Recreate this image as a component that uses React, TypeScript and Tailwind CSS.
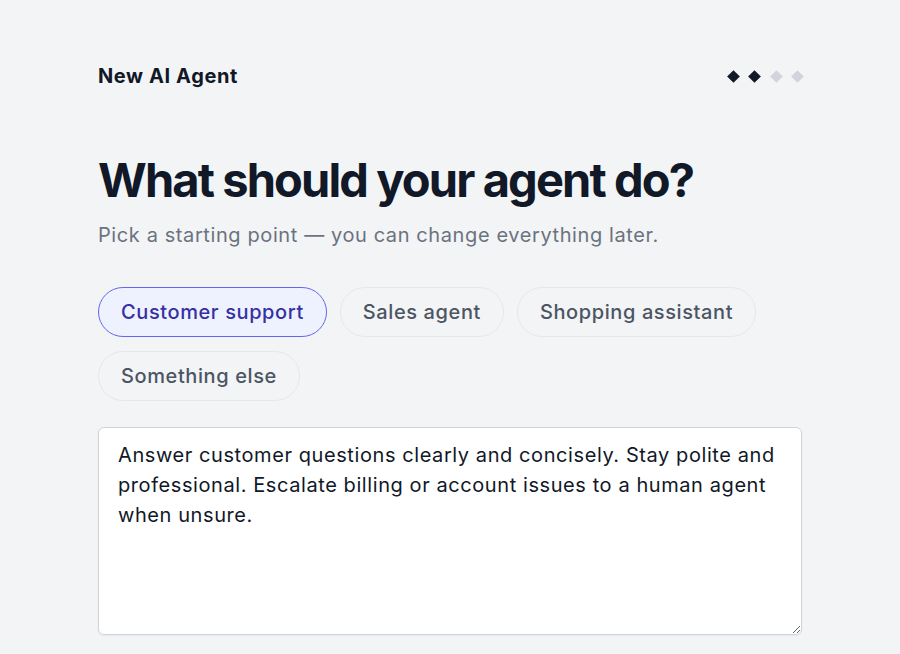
import { useState } from "react";

const OPTIONS = ["Customer support", "Sales agent", "Shopping assistant", "Something else"];

const PROMPTS: Record<string, string> = {
  "Customer support":
    "Answer customer questions clearly and concisely. Stay polite and professional. Escalate billing or account issues to a human agent when unsure.",
  "Sales agent": "Qualify leads, answer product questions and book demos with interested prospects.",
  "Shopping assistant": "Help shoppers find the right products, compare options and complete their order.",
  "Something else": "",
};

export default function App() {
  const [selected, setSelected] = useState("Customer support");
  const [text, setText] = useState(PROMPTS["Customer support"]);

  return (
    <div className="min-h-screen bg-[#f3f4f6] font-['Inter',sans-serif] text-[#111827]">
      <div className="mx-auto w-[704px] pt-[60px]">
        <div className="flex items-center justify-between h-8">
          <h2 className="text-[20px] font-bold tracking-[0.03em]">New AI Agent</h2>
          <div className="flex items-center gap-[12.5px]">
            {[0, 1, 2, 3].map((i) => (
              <span
                key={i}
                className={`block w-[9px] h-[9px] rotate-45 ${i < 2 ? "bg-[#111827]" : "bg-[#d1d5db]"}`}
              />
            ))}
          </div>
        </div>

        <h1 className="mt-[60px] text-[47px] leading-[56px] font-bold tracking-[-0.04em]">
          What should your agent do?
        </h1>
        <p className="mt-[13px] text-[20px] leading-[28px] tracking-[0.03em] text-[#6b7280]">
          Pick a starting point — you can change everything later.
        </p>

        <div className="mt-[38px] flex flex-wrap gap-x-[13px] gap-y-[14px]">
          {OPTIONS.map((o) => (
            <button
              key={o}
              onClick={() => {
                setSelected(o);
                setText(PROMPTS[o]);
              }}
              className={`h-[50px] px-[22px] rounded-full border text-[20px] font-medium tracking-[0.03em] ${
                selected === o
                  ? "bg-[#eef2ff] border-[#6366f1] text-[#3730a3]"
                  : "bg-[#f3f4f6] border-[#e5e7eb] text-[#4b5563]"
              }`}
            >
              {o}
            </button>
          ))}
        </div>

        <textarea
          value={text}
          onChange={(e) => setText(e.target.value)}
          className="mt-[26px] block w-full h-[208px] rounded-[6px] border border-[#d1d5db] bg-white px-[19px] py-[12px] text-[20px] leading-[30px] tracking-[0.029em] text-[#111827] outline-none shadow-[0_1px_2px_rgba(0,0,0,0.05)]"
        />
      </div>
    </div>
  );
}
